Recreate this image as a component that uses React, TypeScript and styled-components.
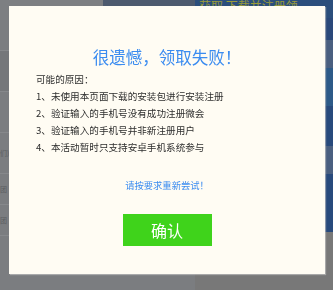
import styled, { createGlobalStyle } from "styled-components";

const GlobalStyle = createGlobalStyle`
  html, body {
    margin: 0;
    padding: 0;
    width: 333px;
    height: 290px;
    overflow: hidden;
    background: #787878;
    font-family: "Noto Sans CJK SC", "Noto Sans", sans-serif;
  }
`;

// dimmed page behind the dialog
const Page = styled.div`
  display: flex;
  width: 333px;
  height: 290px;
`;

const LeftCol = styled.div`
  flex: 1;
  display: flex;
  flex-direction: column;
  background: #7b7d80;
`;

const TopStrip = styled.div`
  height: 20px;
  display: flex;
  background: #7d7f82;
`;

const DarkPatch = styled.div`
  margin-left: auto;
  width: 92px;
  background: #4d5a6e;
`;

const LeftRow = styled.div<{ h: number; tone?: string }>`
  height: ${(p) => p.h}px;
  background: ${(p) => p.tone || "#7b7d80"};
  border-bottom: 1px solid #86888b;
  font-size: 7px;
  color: #5d5f62;
  line-height: ${(p) => p.h}px;
  white-space: nowrap;
`;

const RightCol = styled.div`
  width: 138px;
  display: flex;
  flex-direction: column;
`;

const BlueArea = styled.div`
  height: 232px;
  background: #284a7c;
  display: flex;
  flex-direction: column;
`;

const BlueBand = styled.div<{ h: number; tone: string }>`
  height: ${(p) => p.h}px;
  background: ${(p) => p.tone};
`;

const BandCaption = styled.div`
  color: #9a9a3a;
  font-size: 12px;
  line-height: 12px;
  padding-left: 4px;
  white-space: nowrap;
  overflow: hidden;
`;

const GrayArea = styled.div`
  flex: 1;
  background: #787878;
`;

const Overlay = styled.div`
  position: fixed;
  inset: 0;
  display: flex;
  align-items: flex-start;
  padding: 6px 0 0 9px;
`;

const Dialog = styled.div`
  width: 316px;
  height: 268px;
  box-sizing: border-box;
  background: #fffcf3;
  box-shadow: 1px 1px 1px rgba(200, 200, 200, 0.6);
  padding: 41px 27px 0 27px;
  display: flex;
  flex-direction: column;
`;

const Title = styled.h2`
  margin: 0 0 4px;
  font-size: 16.5px;
  line-height: 20px;
  font-weight: normal;
  color: #3b8cf0;
  text-align: center;
`;

const Text = styled.div`
  font-size: 9.6px;
  line-height: 17px;
  color: #2e2e2e;
  white-space: nowrap;
`;

const List = styled.ol`
  margin: 0;
  padding: 0;
  list-style: none;
`;

const Retry = styled.div`
  margin-top: 21px;
  font-size: 9.3px;
  line-height: 17px;
  color: #3b8cf0;
  text-align: center;
`;

const ConfirmButton = styled.button`
  align-self: center;
  margin-top: 20px;
  width: 89px;
  height: 32px;
  border: none;
  background: #3fd31b;
  color: #fff;
  font-family: inherit;
  font-size: 16px;
  padding: 0;
  cursor: pointer;
`;

const reasons = [
  "1、未使用本页面下载的安装包进行安装注册",
  "2、验证输入的手机号没有成功注册微会",
  "3、验证输入的手机号并非新注册用户",
  "4、本活动暂时只支持安卓手机系统参与",
];

export default function App() {
  return (
    <>
      <GlobalStyle />
      <Page>
        <LeftCol>
          <TopStrip>
            <DarkPatch />
          </TopStrip>
          <LeftRow h={30} />
          <LeftRow h={40} tone="#75777a" />
          <LeftRow h={40} />
          <LeftRow h={40}>们)</LeftRow>
          <LeftRow h={30}>团</LeftRow>
          <LeftRow h={30}>团</LeftRow>
        </LeftCol>
        <RightCol>
          <BlueArea>
            <BlueBand h={18} tone="#2b4e7c">
              <BandCaption>获取 下载并注册领</BandCaption>
            </BlueBand>
            <BlueBand h={22} tone="#2a487a" />
            <BlueBand h={28} tone="#4a5f80" />
            <BlueBand h={38} tone="#2d5a88" />
            <BlueBand h={40} tone="#284a7c" />
            <BlueBand h={28} tone="#4a5f80" />
            <BlueBand h={58} tone="#284a7c" />
          </BlueArea>
          <GrayArea />
        </RightCol>
      </Page>
      <Overlay>
        <Dialog>
          <Title>很遗憾，领取失败！</Title>
          <Text>可能的原因：</Text>
          <List>
            {reasons.map((r) => (
              <Text as="li" key={r}>
                {r}
              </Text>
            ))}
          </List>
          <Retry>请按要求重新尝试！</Retry>
          <ConfirmButton>确认</ConfirmButton>
        </Dialog>
      </Overlay>
    </>
  );
}
